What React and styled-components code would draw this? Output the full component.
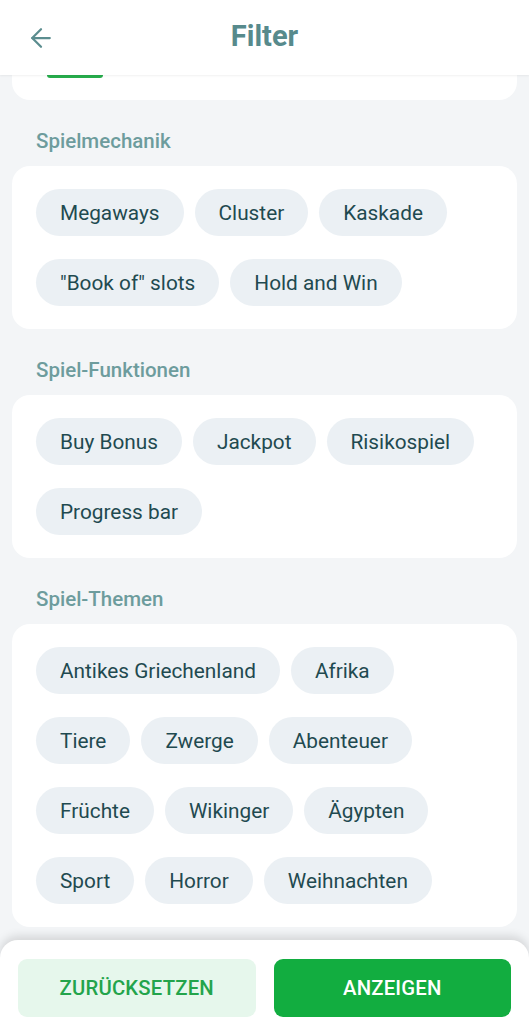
import React from 'react';
import styled, { createGlobalStyle } from 'styled-components';
import { ArrowLeft } from 'lucide-react';

const GlobalStyle = createGlobalStyle`
    html, body {
        margin: 0;
        padding: 0;
        background: #f3f5f7;
        font-family: Roboto, "Noto Sans", "Liberation Sans", sans-serif;
    }
`;

const Page = styled.div`
    width: 529px;
    height: 1024px;
    display: flex;
    flex-direction: column;
    background: #f3f5f7;
    overflow: hidden;
`;

const Header = styled.header`
    height: 75px;
    flex-shrink: 0;
    background: #ffffff;
    display: grid;
    grid-template-columns: 80px 1fr 80px;
    align-items: center;
    box-shadow: 0 1px 2px rgba(0, 0, 0, 0.06);
    position: relative;
    z-index: 2;
`;

const BackButton = styled.button`
    border: none;
    background: transparent;
    padding: 0 0 0 26px;
    display: flex;
    align-items: center;
    color: #5b8d8f;
    height: 40px;
`;

const Title = styled.h1`
    margin: 0;
    text-align: center;
    font-size: 29px;
    font-weight: 700;
    color: #578a8c;
    padding-bottom: 4px;
`;

const Scroll = styled.div`
    flex: 1;
    overflow: hidden;
    padding: 0 12px;
`;

const Card = styled.div`
    background: #ffffff;
    border-radius: 18px;
    padding: ${props => (props.partial ? '0 24px' : '23px 24px')};
    height: ${props => (props.partial ? '25px' : 'auto')};
    border-top-left-radius: ${props => (props.partial ? '0' : '18px')};
    border-top-right-radius: ${props => (props.partial ? '0' : '18px')};
`;

const GreenStub = styled.div`
    width: 56px;
    height: 3px;
    margin-left: 11px;
    background: #27ad4c;
    border-radius: 0 0 6px 6px;
`;

const SectionTitle = styled.h2`
    margin: 29px 0 13px 24px;
    font-size: 20.5px;
    line-height: 24px;
    font-weight: 500;
    color: #6d9c9d;
`;

const ChipWrap = styled.div`
    display: flex;
    flex-wrap: wrap;
    column-gap: 11px;
    row-gap: 23px;
`;

const Chip = styled.span`
    height: 47px;
    display: inline-flex;
    align-items: center;
    padding: 0 24px;
    border-radius: 24px;
    background: ${props => (props.active ? '#e3f5e9' : '#ebf0f4')};
    color: #1f4a50;
    font-size: 20.8px;
    font-weight: 400;
    white-space: nowrap;
`;

const Footer = styled.footer`
    height: 84px;
    flex-shrink: 0;
    background: #ffffff;
    border-radius: 18px 18px 0 0;
    box-shadow: 0 -4px 10px rgba(0, 0, 0, 0.13);
    display: grid;
    grid-template-columns: 1fr 1fr;
    column-gap: 18px;
    padding: 19px 18px 7px;
    box-sizing: border-box;
    position: relative;
    z-index: 2;
    margin-top: 10px;
`;

const ActionButton = styled.button`
    border: none;
    border-radius: 9px;
    font-family: inherit;
    font-size: 20.3px;
    font-weight: 500;
    letter-spacing: 0.2px;
    text-transform: uppercase;
    background: ${props => (props.primary ? '#12ad40' : '#e6f7ec')};
    color: ${props => (props.primary ? '#ffffff' : '#23a44b')};
`;

const sections = [
    { title: 'Spielmechanik', items: ['Megaways', 'Cluster', 'Kaskade', '"Book of" slots', 'Hold and Win'] },
    { title: 'Spiel-Funktionen', items: ['Buy Bonus', 'Jackpot', 'Risikospiel', 'Progress bar'] },
    {
        title: 'Spiel-Themen',
        items: ['Antikes Griechenland', 'Afrika', 'Tiere', 'Zwerge', 'Abenteuer', 'Früchte', 'Wikinger', 'Ägypten', 'Sport', 'Horror', 'Weihnachten'],
    },
];

export default function App() {
    return (
        <Page>
            <GlobalStyle />
            <Header>
                <BackButton aria-label="Zurück">
                    <ArrowLeft size={30} strokeWidth={1.8} />
                </BackButton>
                <Title>Filter</Title>
                <span />
            </Header>
            <Scroll>
                <Card partial>
                    <GreenStub />
                </Card>
                {sections.map(section => (
                    <section key={section.title}>
                        <SectionTitle>{section.title}</SectionTitle>
                        <Card>
                            <ChipWrap>
                                {section.items.map(item => (
                                    <Chip key={item}>{item}</Chip>
                                ))}
                            </ChipWrap>
                        </Card>
                    </section>
                ))}
            </Scroll>
            <Footer>
                <ActionButton>Zurücksetzen</ActionButton>
                <ActionButton primary>Anzeigen</ActionButton>
            </Footer>
        </Page>
    );
}
